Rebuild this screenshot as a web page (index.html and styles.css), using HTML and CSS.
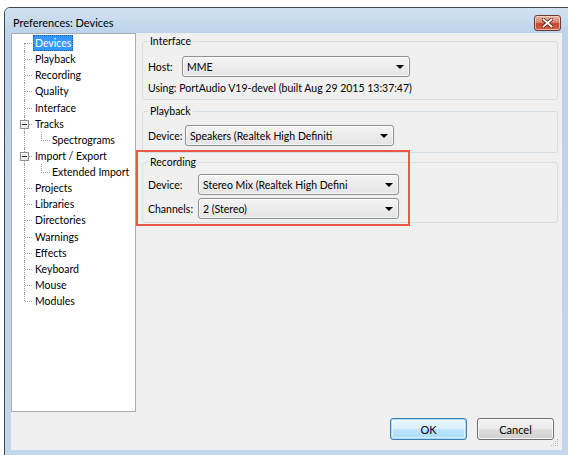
FILE: index.html
```html
<!DOCTYPE html>
<html>
<head>
<meta charset="utf-8">
<title>Preferences: Devices</title>
<link rel="stylesheet" href="styles.css">
</head>
<body>
<div class="window">
  <div class="titlebar">
    <span class="title">Preferences: Devices</span>
    <button class="close" aria-label="Close">
      <svg width="11" height="10" viewBox="0 0 11 10">
        <path d="M1.5 1.5 L9.5 8.5 M9.5 1.5 L1.5 8.5" stroke="#5a2018" stroke-width="3.4" stroke-linecap="square"/>
        <path d="M1.5 1.5 L9.5 8.5 M9.5 1.5 L1.5 8.5" stroke="#ffffff" stroke-width="1.8" stroke-linecap="square"/>
      </svg>
    </button>
  </div>
  <div class="client">
    <div class="main">
      <ul class="tree">
        <li class="row first"><span class="label selected">Devices</span></li>
        <li class="row"><span class="label">Playback</span></li>
        <li class="row"><span class="label">Recording</span></li>
        <li class="row"><span class="label">Quality</span></li>
        <li class="row"><span class="label">Interface</span></li>
        <li class="row"><span class="exp"></span><span class="label">Tracks</span></li>
        <li class="row child"><i class="twig"></i><span class="label">Spectrograms</span></li>
        <li class="row"><span class="exp"></span><span class="label">Import / Export</span></li>
        <li class="row child"><i class="twig"></i><span class="label">Extended Import</span></li>
        <li class="row"><span class="label">Projects</span></li>
        <li class="row"><span class="label">Libraries</span></li>
        <li class="row"><span class="label">Directories</span></li>
        <li class="row"><span class="label">Warnings</span></li>
        <li class="row"><span class="label">Effects</span></li>
        <li class="row"><span class="label">Keyboard</span></li>
        <li class="row"><span class="label">Mouse</span></li>
        <li class="row last"><span class="label">Modules</span></li>
      </ul>

      <div class="pane">
        <fieldset class="group group-interface">
          <legend>Interface</legend>
          <div class="field">
            <span class="caption caption-host">Host:</span>
            <div class="combo combo-host"><span>MME</span><i class="arrow"></i></div>
          </div>
          <div class="info">Using: PortAudio V19-devel (built Aug 29 2015 13:37:47)</div>
        </fieldset>

        <fieldset class="group group-playback">
          <legend>Playback</legend>
          <div class="field field-play">
            <span class="caption caption-play">Device:</span>
            <div class="combo combo-play"><span>Speakers (Realtek High Definiti</span><i class="arrow"></i></div>
          </div>
        </fieldset>

        <div class="highlight-wrap">
          <fieldset class="group group-recording">
            <legend>Recording</legend>
            <div class="grid">
              <span class="caption">Device:</span>
              <div class="combo combo-rec"><span>Stereo Mix (Realtek High Defini</span><i class="arrow"></i></div>
              <span class="caption">Channels:</span>
              <div class="combo combo-rec"><span>2 (Stereo)</span><i class="arrow"></i></div>
            </div>
          </fieldset>
          <div class="highlight"></div>
        </div>
      </div>
    </div>

    <div class="buttons">
      <button class="btn default">OK</button>
      <button class="btn">Cancel</button>
    </div>

    <svg class="grip" width="8" height="8" viewBox="0 0 8 8">
      <g fill="#b8b8b8">
        <rect x="6" y="0" width="1" height="1"/>
        <rect x="4" y="2" width="1" height="1"/><rect x="6" y="2" width="1" height="1"/>
        <rect x="2" y="4" width="1" height="1"/><rect x="4" y="4" width="1" height="1"/><rect x="6" y="4" width="1" height="1"/>
        <rect x="0" y="6" width="1" height="1"/><rect x="2" y="6" width="1" height="1"/><rect x="4" y="6" width="1" height="1"/><rect x="6" y="6" width="1" height="1"/>
      </g>
    </svg>
  </div>
</div>
</body>
</html>
```

FILE: styles.css
```css
html, body {
  margin: 0;
  padding: 0;
  background: #ffffff;
  overflow: hidden;
}

body {
  width: 568px;
  height: 455px;
  font-family: Lato, "Liberation Sans", sans-serif;
  font-size: 10.5px;
  color: #000000;
}

/* Window frame */
.window {
  box-sizing: border-box;
  margin: 7px 0 0 4px;
  width: 570px;
  height: 460px;
  border: 1px solid #404850;
  border-radius: 6px 6px 0 0;
  background: linear-gradient(180deg, #c5d9ee 0%, #bcd2ea 8%, #c3d7ec 100%);
  padding: 0 0 0 6px;
  display: flex;
  flex-direction: column;
}

.titlebar {
  height: 25px;
  display: flex;
  align-items: flex-start;
  background: linear-gradient(180deg, #d3e2f2 0%, #bcd3ea 100%);
  margin-left: -6px;
  padding-left: 8px;
  border-radius: 5px 5px 0 0;
}

.title {
  margin-top: 7px;
  line-height: 15px;
  font-size: 11px;
  color: #000000;
}

.close {
  margin: 7px 12px 0 auto;
  width: 27px;
  height: 16px;
  padding: 0;
  border: 1px solid #6f3a35;
  border-radius: 3px;
  background: linear-gradient(180deg, #eab5a8 0%, #d98470 45%, #c7452b 55%, #d3664a 100%);
  display: flex;
  align-items: center;
  justify-content: center;
  box-shadow: inset 0 0 0 1px rgba(255, 230, 220, 0.6);
}

/* Client area */
.client {
  position: relative;
  width: 551px;
  height: 417px;
  background: #f0f0f0;
  display: flex;
  flex-direction: column;
}

.main {
  display: flex;
  height: 379px;
}

/* Category tree */
.tree {
  box-sizing: border-box;
  width: 125px;
  height: 379px;
  margin: 0;
  padding: 1px 0 0 0;
  list-style: none;
  background: #ffffff;
  border: 1px solid #a9abae;
}

.row {
  position: relative;
  height: 16.125px;
  line-height: 16px;
  padding-left: 21px;
  white-space: nowrap;
}

.row::before {
  content: "";
  position: absolute;
  left: 12px;
  top: 0;
  bottom: 0;
  border-left: 1px dotted #a0a0a0;
}

.row.first::before {
  top: 8px;
}

.row.last::before {
  bottom: 8px;
}

.row::after {
  content: "";
  position: absolute;
  left: 13px;
  top: 8px;
  width: 7px;
  border-top: 1px dotted #a0a0a0;
}

.row.child {
  padding-left: 38px;
}

.row.child::after {
  display: none;
}

.twig {
  position: absolute;
  left: 29px;
  top: 0;
  width: 8px;
  height: 8px;
  border-left: 1px dotted #a0a0a0;
  border-bottom: 1px dotted #a0a0a0;
}

.label {
  display: inline-block;
  padding: 0 2px;
  height: 16px;
  line-height: 16px;
  box-sizing: border-box;
}

.label.selected {
  background: #3399ff;
  color: #ffffff;
  outline: 1px dotted #1c5a9a;
  outline-offset: -1px;
}

.exp {
  position: absolute;
  left: 8px;
  top: 4px;
  width: 9px;
  height: 9px;
  box-sizing: border-box;
  border: 1px solid #8f8f8f;
  background: linear-gradient(135deg, #ffffff 0%, #e4e4e4 100%);
  z-index: 1;
}

.exp::after {
  content: "";
  position: absolute;
  left: 1px;
  top: 3px;
  width: 5px;
  height: 1px;
  background: #2a2a2a;
}

/* Settings pane */
.pane {
  flex: 1;
  padding: 1px 4px 0 6px;
  display: flex;
  flex-direction: column;
}

.group {
  margin: 0;
  padding: 0 5px;
  border: 1px solid #d5dfe5;
  border-radius: 3px;
  min-width: 0;
}

.group legend {
  padding: 0 2px;
  line-height: 15px;
  height: 15px;
  margin-left: 0;
}

.group-interface {
  padding-bottom: 3px;
}

.group-playback {
  margin-top: 4px;
  padding-bottom: 6px;
}

.highlight-wrap {
  position: relative;
  margin-top: 2px;
}

.group-recording {
  padding-bottom: 3px;
}

.highlight {
  position: absolute;
  left: -6px;
  top: -5px;
  width: 270px;
  height: 72px;
  border: 2px solid #e85a44;
  pointer-events: none;
}

.field {
  display: flex;
  align-items: center;
  margin-top: 7px;
}

.field-play {
  margin-top: 6px;
}

.caption {
  white-space: nowrap;
}

.caption-host {
  width: 34px;
}

.caption-play {
  width: 37px;
}

.info {
  margin-top: 4px;
  line-height: 15px;
}

.grid {
  display: grid;
  grid-template-columns: 50px auto;
  justify-content: start;
  align-items: center;
  row-gap: 3px;
  margin-top: 4px;
}

.combo {
  box-sizing: border-box;
  height: 21px;
  display: flex;
  align-items: center;
  padding: 0 4px 0 4px;
  border: 1px solid #8e8f8f;
  border-radius: 3px;
  background: linear-gradient(180deg, #f4f4f4 0%, #ececec 50%, #e4e4e4 100%);
  box-shadow: inset 0 0 0 1px rgba(255, 255, 255, 0.7);
}

.combo span {
  flex: 1;
  white-space: nowrap;
  overflow: hidden;
}

.arrow {
  width: 0;
  height: 0;
  border-left: 4px solid transparent;
  border-right: 4px solid transparent;
  border-top: 4px solid #000000;
  margin-right: 1px;
}

.combo-host {
  width: 228px;
}

.combo-play {
  width: 209px;
}

.combo-rec {
  width: 201px;
}

/* Dialog buttons */
.buttons {
  display: flex;
  justify-content: flex-end;
  gap: 10px;
  margin-top: 6px;
  padding-right: 8px;
}

.btn {
  box-sizing: border-box;
  width: 77px;
  height: 22px;
  padding: 0;
  font: inherit;
  font-size: 11px;
  color: #000000;
  border: 1px solid #707070;
  border-radius: 3px;
  background: linear-gradient(180deg, #f2f2f2 0%, #ebebeb 48%, #dddddd 52%, #cfcfcf 100%);
  box-shadow: inset 0 0 0 1px rgba(255, 255, 255, 0.8);
}

.btn.default {
  border-color: #3c7fb1;
  box-shadow: inset 0 0 0 1px #a6dcf6, inset 0 0 0 2px rgba(255, 255, 255, 0.5);
  background: linear-gradient(180deg, #eaf6fd 0%, #d9f0fc 48%, #bee6fd 52%, #a7d9f5 100%);
}

.grip {
  position: absolute;
  right: 3px;
  bottom: 3px;
}
```
